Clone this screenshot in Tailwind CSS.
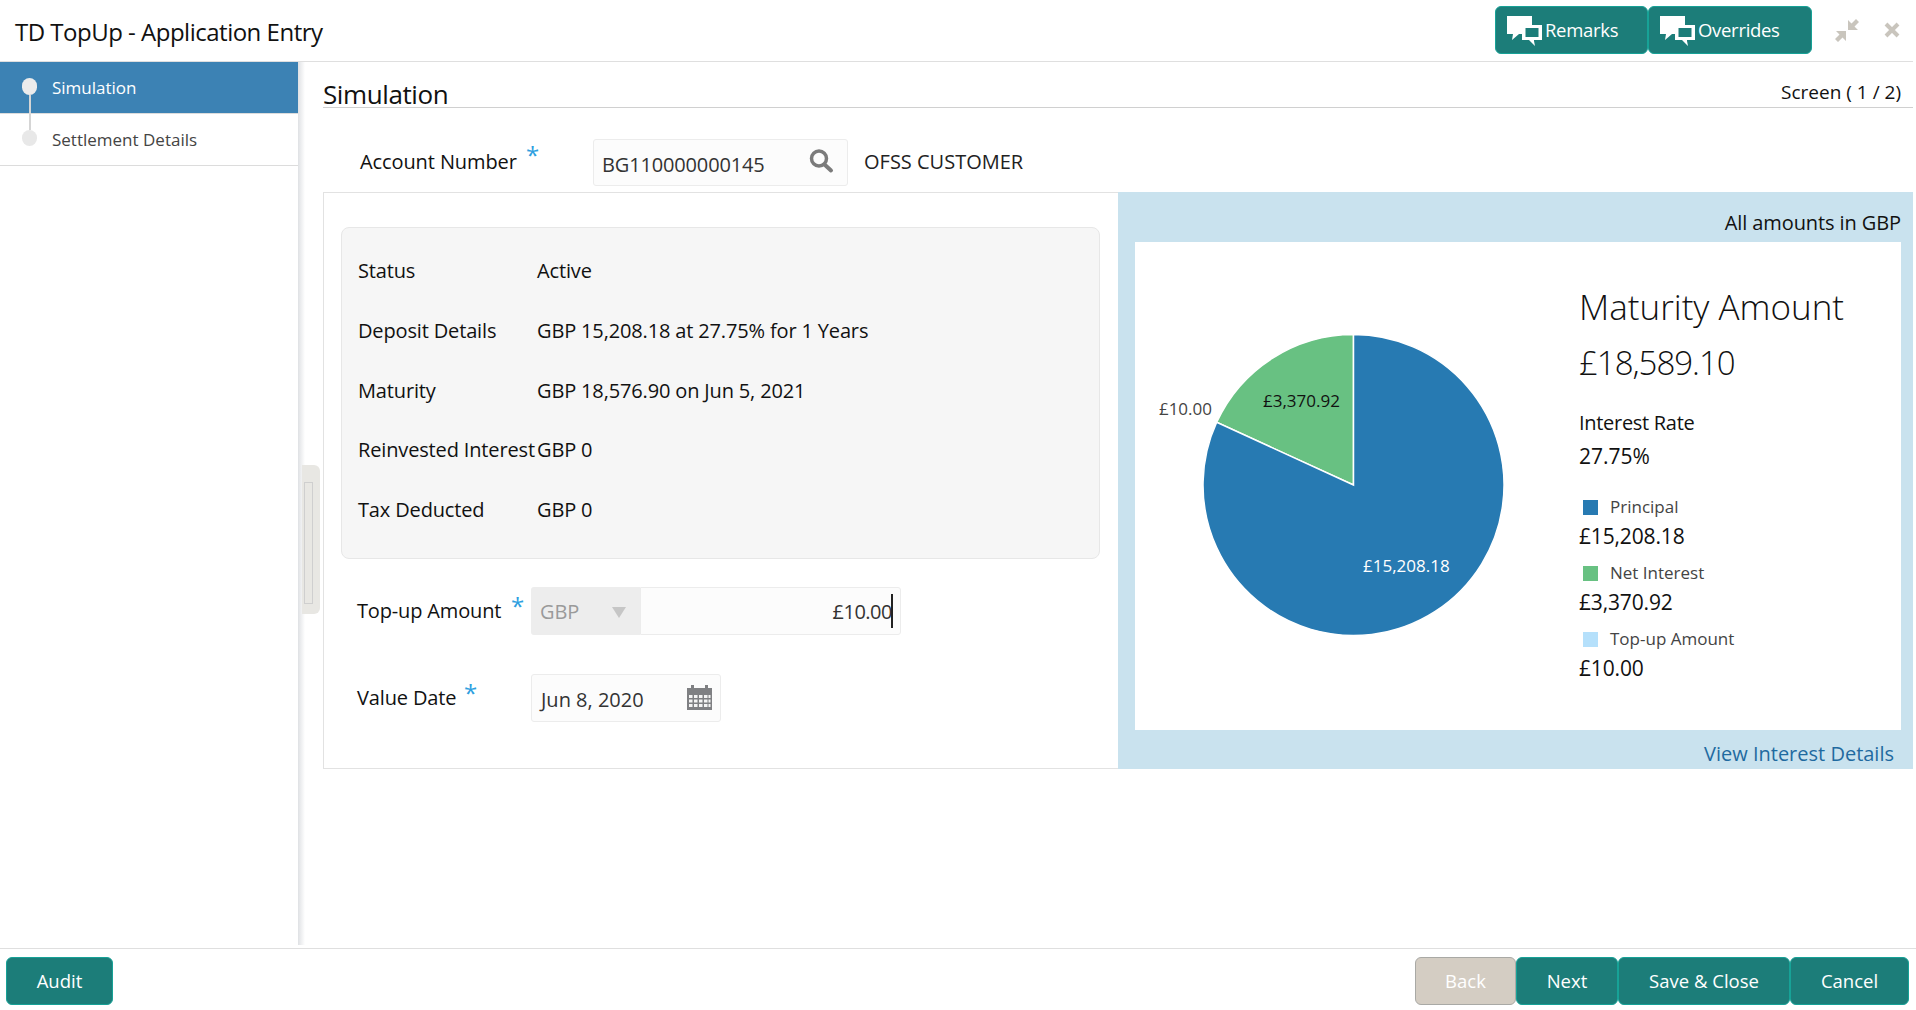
<!DOCTYPE html>
<html lang="en">
<head>
  <meta charset="UTF-8">
  <title>TD TopUp - Application Entry</title>
  <script src="https://cdn.jsdelivr.net/npm/@tailwindcss/browser@4"></script>
</head>
<body class="bg-white font-['Open_Sans',sans-serif] text-[#111] overflow-hidden">
<div class="w-[1916px] h-[1010px] flex flex-col">

  <!-- header -->
  <header class="h-[62px] shrink-0 mr-[3px] border-b border-[#dfdfdf] flex items-start">
    <h1 class="ml-[15px] mt-[16px] text-[24px] leading-[32px] tracking-[-0.5px]">TD TopUp - Application Entry</h1>
    <div class="ml-auto flex mt-[6px]">
      <button class="w-[153px] h-[48px] flex items-center pl-[11px] gap-[3px] rounded-[6px] bg-[#1c7d79] border border-[#17a297] text-white text-[18.500px] tracking-[-0.3px]">
        <svg class="w-[35px] h-[31px] shrink-0" viewBox="0 0 35 31"><path d="M0 1h25v18h-13l-7 6 1-6H0z" fill="#fff"/><path d="M15 10h20v15h-8v1l1 5-6-6h-7z" fill="#fff"/><rect x="18.500" y="13" width="13" height="9" fill="#1c7d79"/></svg>
        <span>Remarks</span>
      </button>
      <button class="w-[164px] h-[48px] flex items-center pl-[11px] gap-[3px] rounded-[6px] bg-[#1c7d79] border border-[#17a297] text-white text-[18.500px] tracking-[-0.3px]">
        <svg class="w-[35px] h-[31px] shrink-0" viewBox="0 0 35 31"><path d="M0 1h25v18h-13l-7 6 1-6H0z" fill="#fff"/><path d="M15 10h20v15h-8v1l1 5-6-6h-7z" fill="#fff"/><rect x="18.500" y="13" width="13" height="9" fill="#1c7d79"/></svg>
        <span>Overrides</span>
      </button>
    </div>
    <svg class="w-[26px] h-[26px] ml-[22px] mt-[17px]" viewBox="0 0 26 26" fill="#c9c5bd">
      <path d="M14 3v10h10l-3.500-3.500 4.500-4.500-3-3-4.500 4.500z"/><path d="M2 14h10v10l-3.500-3.500-4.500 4.500-3-3 4.500-4.500z"/>
    </svg>
    <svg class="w-[16px] h-[16px] ml-[24px] mt-[22px] mr-[13px]" viewBox="0 0 16 16"><path d="M2 2l12 12M14 2L2 14" stroke="#c9c5bd" stroke-width="4"/></svg>
  </header>

  <div class="flex-1 flex min-h-0">
    <!-- sidebar -->
    <aside class="w-[298px] shrink-0">
      <div class="relative h-[51px] bg-[#3c82b4] flex items-center pl-[52px] pt-[1px] text-white text-[17px]">
        <span class="absolute left-[22px] top-[16px] w-[15px] h-[17px] rounded-full bg-[#ececec]"></span>
        <span class="absolute left-[29px] top-[33px] w-[2px] h-[18px] bg-[#d5d5d5]"></span>
        Simulation
      </div>
      <div class="relative h-[53px] border-t border-b border-[#dcdcdc] flex items-center pl-[52px] text-[#444] text-[17px]">
        <span class="absolute left-[22px] top-[16px] w-[15px] h-[16px] rounded-full bg-[#e8e8e8]"></span>
        <span class="absolute left-[29px] top-0 w-[2px] h-[16px] bg-[#d5d5d5]"></span>
        Settlement Details
      </div>
    </aside>

    <!-- resizer -->
    <div class="relative w-[25px] shrink-0 h-[883px] bg-gradient-to-r from-[#dfe1e4] to-white to-[28%]">
      <div class="absolute left-[4px] top-[403px] w-[18px] h-[149px] rounded-r-[6px] bg-[#e8e7e3]">
        <div class="absolute left-[2px] top-[17px] w-[9px] h-[122px] border border-[#cfcfcf]"></div>
      </div>
    </div>

    <!-- content -->
    <main class="flex-1 min-w-0 mr-[3px]">
      <div class="h-[46px] border-b border-[#d0d0d0] flex items-end justify-between pb-[1px]">
        <h2 class="text-[26px] leading-[40px] tracking-[-0.4px] -mb-[8px]">Simulation</h2>
        <span class="mr-[12px] mb-[1px] text-[19px] leading-[26px]">Screen ( 1 / 2)</span>
      </div>

      <div class="h-[84px] flex items-start pt-[31px]">
        <label class="w-[270px] pl-[37px] text-[20px] leading-[28px] mt-[9px] tracking-[-0.1px] relative">
          Account Number
          <span class="absolute left-[203px] top-[-7px] text-[#2e9fe0] text-[24px]">*</span>
        </label>
        <div class="w-[255px] h-[47px] relative border border-[#ececec] rounded-[3px] bg-[#fcfcfc] pl-[8px] pt-[11px] text-[20px] leading-[28px] tracking-[-0.15px] text-[#333]">
          BG110000000145
          <svg class="absolute left-[214px] top-[8px] w-[26px] h-[26px]" viewBox="0 0 26 26" fill="none" stroke="#7b7b7b"><circle cx="11" cy="10.500" r="7.500" stroke-width="3.500"/><path d="M16.500 16.500l6.500 6" stroke-width="4" stroke-linecap="round"/></svg>
        </div>
        <span class="ml-[16px] text-[20px] leading-[28px] mt-[9px] text-[#222]">OFSS CUSTOMER</span>
      </div>

      <div class="flex h-[577px]">
        <!-- left part -->
        <section class="w-[795px] shrink-0 border border-r-0 border-[#e2e2e2] pl-[17px] pt-[34px]">
          <div class="w-[759px] h-[332px] rounded-[8px] border border-[#e7e7e7] bg-[#f6f6f6] pl-[16px] pt-[13px] text-[20px] tracking-[-0.15px]">
            <div class="flex h-[60px] items-center"><span class="w-[179px]">Status</span><span>Active</span></div>
            <div class="flex h-[60px] items-center"><span class="w-[179px]">Deposit Details</span><span>GBP 15,208.18 at 27.75% for 1 Years</span></div>
            <div class="flex h-[59px] items-center"><span class="w-[179px]">Maturity</span><span>GBP 18,576.90 on Jun 5, 2021</span></div>
            <div class="flex h-[60px] items-center"><span class="w-[179px] whitespace-nowrap">Reinvested Interest</span><span>GBP 0</span></div>
            <div class="flex h-[60px] items-center"><span class="w-[179px]">Tax Deducted</span><span>GBP 0</span></div>
          </div>

          <div class="flex items-center mt-[28px] text-[20px] tracking-[-0.15px]">
            <label class="relative w-[190px] pl-[16px] -mt-[1px]">Top-up Amount<span class="absolute left-[170px] top-[-8px] text-[#2e9fe0] text-[24px]">*</span></label>
            <div class="w-[109px] h-[48px] flex items-center justify-between pl-[9px] pr-[14px] pt-[2px] rounded-l-[3px] bg-[#ededed] text-[#9a9a9a]">
              GBP
              <span class="w-0 h-0 border-l-[7px] border-r-[7px] border-t-[11px] border-l-transparent border-r-transparent border-t-[#c6c6c6]"></span>
            </div>
            <div class="w-[261px] h-[48px] flex items-center justify-end pr-[7px] border border-[#ececec] rounded-r-[3px] bg-[#fcfcfc] text-[#333]">
              <span class="tracking-[-0.5px] pt-[2px]">£10.00</span><span class="w-[2px] h-[34px] -ml-[1px] bg-[#222]"></span>
            </div>
          </div>

          <div class="flex items-center mt-[39px] text-[20px] tracking-[-0.15px]">
            <label class="relative w-[190px] pl-[16px]">Value Date<span class="absolute left-[123px] top-[-8px] text-[#2e9fe0] text-[24px]">*</span></label>
            <div class="relative w-[190px] h-[48px] flex items-center pl-[9px] pt-[3px] border border-[#ececec] rounded-[3px] bg-[#fcfcfc] text-[#333] tracking-normal">
              Jun 8, 2020
              <svg class="absolute left-[155px] top-[10px] w-[25px] h-[25px]" viewBox="0 0 25 25">
                <path fill="#7f8083" d="M0 3h4V0h3v3h11V0h3v3h4v22H0z"/>
                <g fill="#f4f4f4">
                  <rect x="2" y="10" width="3.500" height="3"/><rect x="7" y="10" width="3.500" height="3"/><rect x="12" y="10" width="3.500" height="3"/><rect x="17" y="10" width="3.500" height="3"/><rect x="21.500" y="10" width="2" height="3"/>
                  <rect x="2" y="14.500" width="3.500" height="3"/><rect x="7" y="14.500" width="3.500" height="3"/><rect x="12" y="14.500" width="3.500" height="3"/><rect x="17" y="14.500" width="3.500" height="3"/><rect x="21.500" y="14.500" width="2" height="3"/>
                  <rect x="2" y="19" width="3.500" height="3"/><rect x="7" y="19" width="3.500" height="3"/><rect x="12" y="19" width="3.500" height="3"/><rect x="17" y="19" width="3.500" height="3"/><rect x="21.500" y="19" width="2" height="3"/>
                </g>
              </svg>
            </div>
          </div>
        </section>

        <!-- right part -->
        <section class="flex-1 min-w-0 bg-[#c9e2ee] flex flex-col pl-[17px] pr-[12px]">
          <div class="h-[50px] text-right text-[20px] leading-[61px] tracking-[-0.1px] shrink-0">All amounts in GBP</div>
          <div class="h-[488px] bg-white flex shrink-0">
            <svg class="w-[444px] h-[488px] shrink-0" viewBox="0 0 444 488">
              <path d="M218.500 243 L81.700 180.300 A150.500 150.500 0 0 1 218.500 92.500 Z" fill="#68c182" stroke="#fff" stroke-width="1.500"/>
              <path d="M218.500 243 L218.500 92.500 A150.500 150.500 0 1 1 81.700 180.300 Z" fill="#277ab2" stroke="#fff" stroke-width="1.500"/>
              <text x="77" y="173" text-anchor="end" font-size="17" fill="#444">£10.00</text>
              <text x="128" y="165" font-size="17" fill="#111">£3,370.92</text>
              <text x="228" y="330" font-size="17" fill="#fff">£15,208.18</text>
            </svg>
            <div class="pt-[44px]">
              <div class="text-[35px] leading-[42px] font-light">Maturity Amount</div>
              <div class="mt-[14px] text-[33px] leading-[42px] font-light tracking-[-1px]">£18,589.10</div>
              <div class="mt-[24px] text-[20px] leading-[30px] tracking-[-0.3px]">Interest Rate</div>
              <div class="mt-[3px] text-[21px] leading-[30px]">27.75%</div>
              <div class="mt-[24px] flex items-center h-[24px] pl-[4px] text-[17px] text-[#444]"><span class="w-[15px] h-[15px] bg-[#277ab2] mr-[12px]"></span>Principal</div>
              <div class="h-[42px] pt-[2px] text-[21px] leading-[30px] tracking-[-0.15px]">£15,208.18</div>
              <div class="flex items-center h-[24px] pl-[4px] text-[17px] text-[#444]"><span class="w-[15px] h-[15px] bg-[#68c182] mr-[12px]"></span>Net Interest</div>
              <div class="h-[42px] pt-[2px] text-[21px] leading-[30px] tracking-[-0.15px]">£3,370.92</div>
              <div class="flex items-center h-[24px] pl-[4px] text-[17px] text-[#444]"><span class="w-[15px] h-[15px] bg-[#b5e0fb] mr-[12px]"></span>Top-up Amount</div>
              <div class="h-[42px] pt-[2px] text-[21px] leading-[30px] tracking-[-0.15px]">£10.00</div>
            </div>
          </div>
          <a class="h-[39px] text-right pr-[7px] text-[#1f6aa0] text-[20px] leading-[47px] shrink-0">View Interest Details</a>
        </section>
      </div>
    </main>
  </div>

  <!-- footer -->
  <footer class="h-[62px] shrink-0 border-t border-[#dfdfdf] flex items-start pt-[8px] pl-[6px] pr-[7px] text-[18.500px] text-white">
    <button class="w-[107px] h-[48px] rounded-[6px] bg-[#1c7d79] border border-[#17a297]">Audit</button>
    <button class="ml-auto w-[101px] h-[48px] rounded-[6px] bg-[#d4cdc3] border border-[#a9a9a5]">Back</button>
    <button class="w-[102px] h-[48px] rounded-[6px] bg-[#1c7d79] border border-[#17a297]">Next</button>
    <button class="w-[172px] h-[48px] rounded-[6px] bg-[#1c7d79] border border-[#17a297]">Save &amp; Close</button>
    <button class="w-[119px] h-[48px] rounded-[6px] bg-[#1c7d79] border border-[#17a297]">Cancel</button>
  </footer>
</div>
</body>
</html>
